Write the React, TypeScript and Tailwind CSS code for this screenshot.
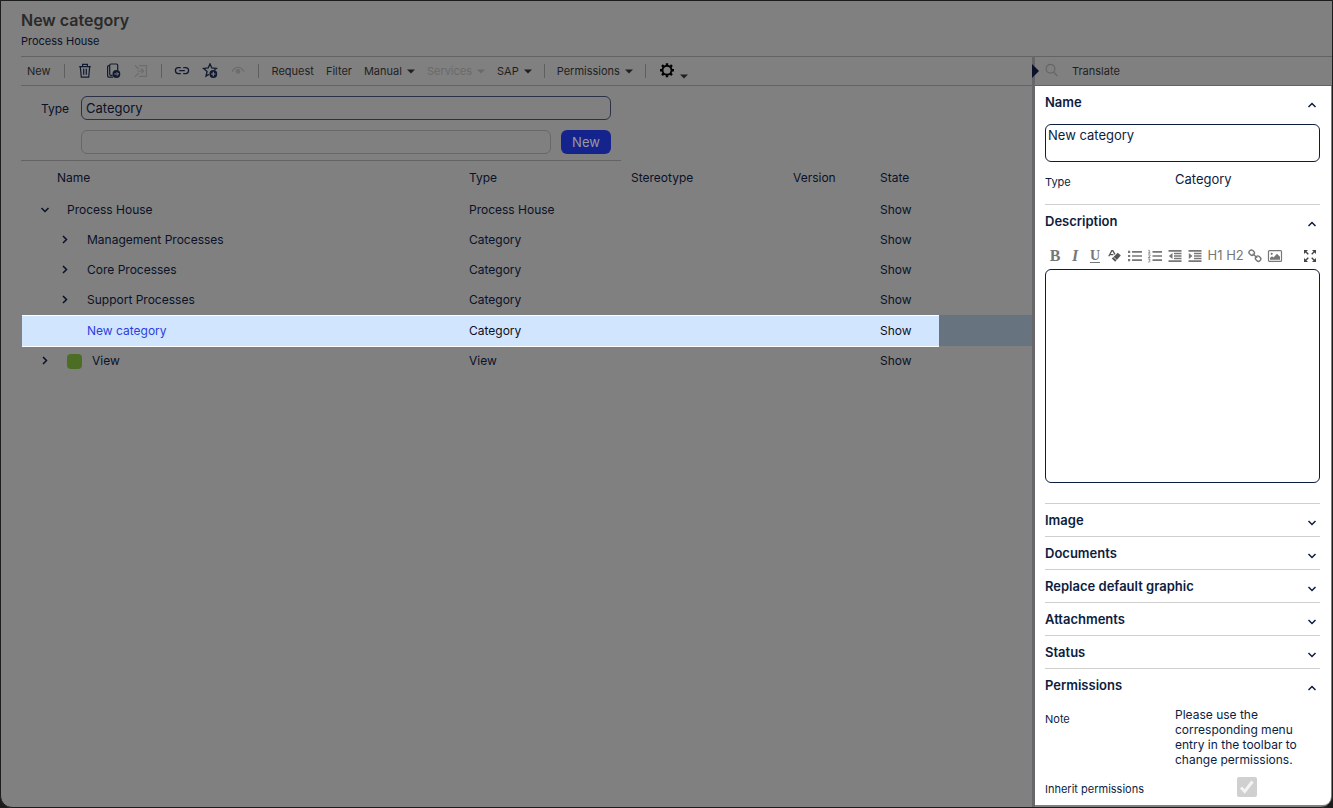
import React, { useState } from "react";

type IconProps = { children: React.ReactNode; className?: string };

function Icon({ children, className = "" }: IconProps) {
  return (
    <svg
      viewBox="0 0 16 16"
      className={`w-4 h-4 shrink-0 ${className}`}
      fill="none"
      stroke="currentColor"
      strokeWidth="1.2"
      aria-hidden="true"
    >
      {children}
    </svg>
  );
}

function Caret() {
  return (
    <svg viewBox="0 0 8 5" className="w-2 h-[5px]" fill="currentColor" aria-hidden="true">
      <path d="M0 0.5h8L4 4.5z" />
    </svg>
  );
}

function Chevron({ dir }: { dir: "up" | "down" | "right" }) {
  const paths = {
    up: "M4.5 10 8 6.5 11.5 10",
    down: "M4.5 6 8 9.5 11.5 6",
    right: "M6 4 9.5 7.5 6 11"
  };
  return (
    <Icon>
      <path d={paths[dir]} strokeWidth="1.5" />
    </Icon>
  );
}

function Separator() {
  return <span className="w-px h-3.5 bg-[#5f5f5f]" />;
}

type ToolProps = { label: string; disabled?: boolean; children: React.ReactNode };

function IconTool({ label, disabled, children }: ToolProps) {
  return (
    <button aria-label={label} disabled={disabled} className="text-[#111a30] disabled:text-[#6c6c6c]">
      <Icon>{children}</Icon>
    </button>
  );
}

function MenuTool({ label, disabled }: { label: string; disabled?: boolean }) {
  return (
    <button disabled={disabled} className="flex items-center gap-[5px] disabled:text-[#6a6a6a]">
      {label}
      <Caret />
    </button>
  );
}

function Toolbar() {
  return (
    <div className="flex items-center gap-3 h-[30px] border-y border-[#636363] pl-1.5 text-[11px] text-[#1f1f1f]">
      <button className="pr-px">New</button>
      <Separator />
      <IconTool label="Delete">
        <path d="M2.2 3.6h11.6M5.6 3.6V1.4h4.8v2.2M3.3 3.6l1 10.6h7.4l1-10.6M6.7 5.8v6M9.3 5.8v6" />
      </IconTool>
      <IconTool label="Copy">
        <path d="M7.5 12.4H6a1.3 1.3 0 0 1-1.3-1.3V2.3A1.3 1.3 0 0 1 6 1h5.4a1.3 1.3 0 0 1 1.3 1.3v5M4.7 2.6H3.9a1.3 1.3 0 0 0-1.3 1.3v8.8A1.5 1.5 0 0 0 4.1 14.2h4" />
        <circle cx="11.4" cy="11" r="3.9" fill="currentColor" stroke="none" />
        <path d="M9.2 11h4.2M11.7 9.2l1.8 1.8-1.8 1.8" stroke="#808080" strokeWidth="1" />
      </IconTool>
      <IconTool label="Move" disabled>
        <path d="M1.8 2.2 4.6 5 5.8 6.2M1.8 13.8 5.8 9.8M6 2.6h7.5v10.8H6M4.5 8h6M8.2 5.7 10.5 8l-2.3 2.3" />
      </IconTool>
      <Separator />
      <IconTool label="Link">
        <path d="M6.8 4.6H4.4a3 3 0 0 0 0 6h2.4M9.2 4.6h2.4a3 3 0 0 1 0 6H9.2M5.2 7.6h5.6" strokeWidth="1.3" />
      </IconTool>
      <IconTool label="Add to favourites">
        <path d="M12.4 6.8 14.4 5.4 9.8 5 8 .9 6.2 5l-4.6.4 3.5 3-1.1 4.7 2.8-1.7" strokeWidth="1.3" />
        <circle cx="11.3" cy="11" r="3.9" fill="currentColor" stroke="none" />
        <path d="M9.1 11h4.4M11.3 8.8v4.4" stroke="#808080" />
      </IconTool>
      <IconTool label="Watch" disabled>
        <path d="M2 8.6Q4.4 4.3 8 4.3t6 4.3" />
        <circle cx="8" cy="8.4" r="2.3" fill="currentColor" stroke="none" />
      </IconTool>
      <Separator />
      <button className="pl-px">Request</button>
      <button>Filter</button>
      <MenuTool label="Manual" />
      <MenuTool label="Services" disabled />
      <MenuTool label="SAP" />
      <Separator />
      <MenuTool label="Permissions" />
      <Separator />
      <button aria-label="Settings" className="flex items-end gap-[5px] pl-px">
        <Icon className="text-black">
          <circle cx="8" cy="7.2" r="4.5" strokeWidth="1.9" />
          <path
            d="M8 .2v2M8 12.2v2M1 7.2h2M13 7.2h2M3 2.2l1.5 1.5M11.5 10.7l1.5 1.5M3 12.2l1.5-1.5M11.5 3.7 13 2.2"
            strokeWidth="2.4"
          />
        </Icon>
        <Caret />
      </button>
    </div>
  );
}

function CreateForm() {
  return (
    <form
      className="grid grid-cols-[60px_1fr_50px] gap-y-2.5 w-[600px] pt-2.5 pb-1.5 border-b border-[#636363] text-[13px] text-[#0a1128]"
      onSubmit={(e) => e.preventDefault()}
    >
      <label htmlFor="type" className="h-6 pl-5 pt-px text-xs leading-6">
        Type
      </label>
      <input
        id="type"
        defaultValue="Category"
        className="col-span-2 mr-2.5 h-6 px-1 rounded-md border border-[#2b3247]"
      />
      <input
        aria-label="Name of the new element"
        className="col-start-2 mr-5 h-6 px-1 rounded-md border border-[#686868]"
      />
      <button className="-ml-2.5 mr-2.5 h-6 pt-0.5 rounded-md bg-[#15248c] text-[#9a9a9a]">New</button>
    </form>
  );
}

type Row = {
  name: string;
  type: string;
  level: number;
  open?: boolean;
  leaf?: boolean;
  selected?: boolean;
  swatch?: boolean;
};

const rows: Row[] = [
  { name: "Process House", type: "Process House", level: 0, open: true },
  { name: "Management Processes", type: "Category", level: 1 },
  { name: "Core Processes", type: "Category", level: 1 },
  { name: "Support Processes", type: "Category", level: 1 },
  { name: "New category", type: "Category", level: 1, leaf: true, selected: true },
  { name: "View", type: "View", level: 0, swatch: true }
];

function TreeTable() {
  return (
    <div className="pl-px">
      <table className="w-full table-fixed text-left text-xs text-[#0a1128]">
        <colgroup>
          <col className="w-[447px]" />
          <col className="w-[162px]" />
          <col className="w-[162px]" />
          <col className="w-[87px]" />
          <col className="w-[59px]" />
          <col />
        </colgroup>
        <thead>
          <tr className="h-[34px]">
            <th className="font-normal pl-[35px]">Name</th>
            <th className="font-normal">Type</th>
            <th className="font-normal">Stereotype</th>
            <th className="font-normal">Version</th>
            <th className="font-normal">State</th>
            <th />
          </tr>
        </thead>
        <tbody>
          {rows.map((row) => {
            const cell = row.selected ? "bg-[#d1e5ff] border-y border-white" : "";
            return (
              <tr key={row.name} className={row.selected ? "h-[31px] bg-[#687380]" : "h-[30px]"}>
                <td className={cell}>
                  <div className={`flex items-center ${row.level ? "pl-[35px]" : "pl-[15px]"}`}>
                    {row.leaf ? (
                      <span className="w-4" />
                    ) : (
                      <button aria-label={`Toggle ${row.name}`}>
                        <Chevron dir={row.open ? "down" : "right"} />
                      </button>
                    )}
                    {row.swatch && <span className="w-[15px] h-[15px] ml-3.5 -mr-1 rounded-sm bg-[#4b6e24]" />}
                    <span className={row.selected ? "pl-3.5 text-[#2a3fe0]" : "pl-3.5"}>{row.name}</span>
                  </div>
                </td>
                <td className={cell}>{row.type}</td>
                <td className={cell} />
                <td className={cell} />
                <td className={cell}>Show</td>
                <td />
              </tr>
            );
          })}
        </tbody>
      </table>
    </div>
  );
}

type SectionProps = { title: string; first?: boolean; defaultOpen?: boolean; children?: React.ReactNode };

function Section({ title, first, defaultOpen = false, children }: SectionProps) {
  const [open, setOpen] = useState(defaultOpen);
  return (
    <section className={first ? "" : "border-t border-[#cfcfcf]"}>
      <h2>
        <button
          aria-expanded={open}
          onClick={() => setOpen(!open)}
          className="flex w-full h-8 items-center justify-between text-[13px] font-semibold"
        >
          <span className="pt-0.5">{title}</span>
          <span className="pt-1.5">
            <Chevron dir={open ? "up" : "down"} />
          </span>
        </button>
      </h2>
      {open && children}
    </section>
  );
}

function EditorTool({ label, children }: { label: string; children: React.ReactNode }) {
  return (
    <button type="button" aria-label={label} className="w-5 h-5 flex items-center justify-center">
      {children}
    </button>
  );
}

function EditorToolbar() {
  return (
    <div className="flex items-center h-5 text-[#777] text-[13px]">
      <EditorTool label="Bold">
        <span className="font-['Liberation_Serif',serif] font-bold text-base">B</span>
      </EditorTool>
      <EditorTool label="Italic">
        <span className="font-['Liberation_Serif',serif] font-bold italic text-base">I</span>
      </EditorTool>
      <EditorTool label="Underline">
        <span className="font-['Liberation_Serif',serif] font-bold underline underline-offset-2 text-sm">U</span>
      </EditorTool>
      <EditorTool label="Remove format">
        <Icon className="text-[#555]">
          <path d="M1.8 8.2 4.8 2.6h1L8 6.4M3 6.6h3.4" strokeWidth="1.3" />
          <path d="m10.8 4.8 3 2.8-5.6 6.2-3.4-3.2z" fill="currentColor" stroke="none" />
          <path d="m6.4 9 3.4 3.2" stroke="#fff" strokeWidth=".7" />
        </Icon>
      </EditorTool>
      <EditorTool label="Bullet list">
        <Icon>
          <path d="M5 3.8h10M5 8h10M5 12.2h10" strokeWidth="1.7" />
          <path d="M1 3.8h2.2M1 8h2.2M1 12.2h2.2" strokeWidth="2.2" />
        </Icon>
      </EditorTool>
      <EditorTool label="Numbered list">
        <Icon>
          <path d="M5.5 3.8H15M5.5 8H15M5.5 12.2H15" strokeWidth="1.7" />
          <path
            d="M1.3 2.3h1v2.8M1 5.1h2.5M1.1 6.9h2v1L1.2 9.5h2.2M1.1 11h2l-.9 1.2c1.4 0 1.4 2.1-1.1 1.8"
            strokeWidth=".8"
          />
        </Icon>
      </EditorTool>
      <EditorTool label="Outdent">
        <Icon>
          <path d="M1.5 2.8h13M7 5.5h7.5M7 8h7.5M7 10.5h7.5M1.5 13.2h13" strokeWidth="1.7" />
          <path d="M5.5 5v6L1.8 8z" fill="currentColor" stroke="none" />
        </Icon>
      </EditorTool>
      <EditorTool label="Indent">
        <Icon>
          <path d="M1.5 2.8h13M7 5.5h7.5M7 8h7.5M7 10.5h7.5M1.5 13.2h13" strokeWidth="1.7" />
          <path d="M1.8 5v6l3.7-3z" fill="currentColor" stroke="none" />
        </Icon>
      </EditorTool>
      <EditorTool label="Heading 1">H1</EditorTool>
      <EditorTool label="Heading 2">H2</EditorTool>
      <EditorTool label="Insert link">
        <Icon>
          <rect x="2" y="2.4" width="5.4" height="4.6" rx="2" transform="rotate(45 4.7 4.7)" strokeWidth="1.4" />
          <rect x="8.4" y="8.4" width="5.4" height="4.6" rx="2" transform="rotate(45 11.1 10.7)" strokeWidth="1.4" />
          <path d="m5.6 5.8 4.6 4" strokeWidth="1.4" />
        </Icon>
      </EditorTool>
      <EditorTool label="Insert image">
        <Icon>
          <rect x="1.5" y="2.6" width="13" height="10.8" rx="1" />
          <circle cx="4.7" cy="5.8" r="1.1" fill="currentColor" stroke="none" />
          <path d="M3 11.8V10l2-1.8 1.5 1.3L10 5.8l3 3v3z" fill="currentColor" stroke="none" />
        </Icon>
      </EditorTool>
      <span className="flex-1" />
      <EditorTool label="Full screen">
        <Icon className="text-[#444]">
          <path d="m3 3 3.3 3.3M13 3 9.7 6.3M3 13l3.3-3.3M13 13 9.7 9.7" strokeWidth="1.4" />
          <path
            d="M2 2h4L2 6zM14 2h-4l4 4zM2 14h4l-4-4zM14 14h-4l4-4z"
            fill="currentColor"
            stroke="none"
          />
        </Icon>
      </EditorTool>
    </div>
  );
}

function DetailsPanel() {
  return (
    <aside className="flex flex-col w-[297px] shrink-0">
      <div className="flex items-center h-[30px] border-y border-[#636363] pl-2 gap-3 text-[11px] text-[#1f1f1f]">
        <button aria-label="Search" className="text-[#656565]">
          <Icon>
            <circle cx="7.5" cy="5.8" r="4.4" />
            <path d="m10.7 9.2 3.6 3.8" />
          </Icon>
        </button>
        <button className="pl-px">Translate</button>
      </div>
      <div className="flex-1 mb-0.5 mr-px pl-2.5 pr-[11px] bg-white rounded-br-lg text-[#0c1d40]">
        <Section title="Name" first defaultOpen>
          <textarea
            aria-label="Name"
            defaultValue="New category"
            className="block w-full h-[38px] mt-1.5 px-0.5 pt-0.5 resize-none rounded-md border border-[#0c1d40] text-[13px] leading-4"
          />
          <dl className="flex pt-2 h-[42px]">
            <dt className="w-[130px] pt-1 text-[11px] leading-4">Type</dt>
            <dd className="text-[13px] leading-[18px]">Category</dd>
          </dl>
        </Section>
        <Section title="Description" defaultOpen>
          <div className="pt-[9px] pb-5">
            <EditorToolbar />
            <textarea
              aria-label="Description"
              className="block w-full h-[214px] mt-[3px] px-1 resize-none rounded-md border border-[#0c1d40] text-[13px]"
            />
          </div>
        </Section>
        <Section title="Image" />
        <Section title="Documents" />
        <Section title="Replace default graphic" />
        <Section title="Attachments" />
        <Section title="Status" />
        <Section title="Permissions" defaultOpen>
          <dl className="flex pt-1.5 text-xs">
            <dt className="w-[130px] shrink-0 pt-1 text-[11px] leading-4">Note</dt>
            <dd className="leading-[15px]">
              Please use the corresponding menu entry in the toolbar to change permissions.
            </dd>
          </dl>
          <div className="flex items-center pt-2.5 pb-2">
            <label htmlFor="inherit" className="w-48 pt-1 text-[11px] leading-4">
              Inherit permissions
            </label>
            <span className="grid w-5 h-5">
              <input
                id="inherit"
                type="checkbox"
                defaultChecked
                disabled
                className="appearance-none col-start-1 row-start-1 rounded-xs bg-[#d0d0d0]"
              />
              <svg
                viewBox="0 0 20 20"
                className="col-start-1 row-start-1 w-5 h-5 pointer-events-none"
                fill="none"
                stroke="#f4f4f4"
                strokeWidth="3"
                aria-hidden="true"
              >
                <path d="m4 10.5 3.7 4L15.5 4.5" />
              </svg>
            </span>
          </div>
        </Section>
      </div>
    </aside>
  );
}

export default function App() {
  return (
    <div className="min-h-screen bg-[#1c1c1c] flex font-[Inter,sans-serif]">
      <div className="flex-1 min-w-0 flex flex-col border border-[#1c1c1c] rounded-b-xl bg-[#808080]">
        <header className="h-[55px] pl-5 pt-[7px]">
          <h1 className="text-base leading-6 font-semibold text-[#2a2a2a]">New category</h1>
          <a href="#process-house" className="block pt-px text-[11px] leading-4 text-[#0a1128]">
            Process House
          </a>
        </header>
        <div className="flex-1 flex">
          <main className="flex-1 min-w-0 pl-5">
            <Toolbar />
            <CreateForm />
            <TreeTable />
          </main>
          <div className="w-[3px] bg-[#67676a]">
            <svg viewBox="0 0 7 14" className="w-[7px] h-3.5 mt-2 max-w-none relative" fill="#0a1128" aria-hidden="true">
              <path d="M0 0v14l7-7z" />
            </svg>
          </div>
          <DetailsPanel />
        </div>
      </div>
    </div>
  );
}
